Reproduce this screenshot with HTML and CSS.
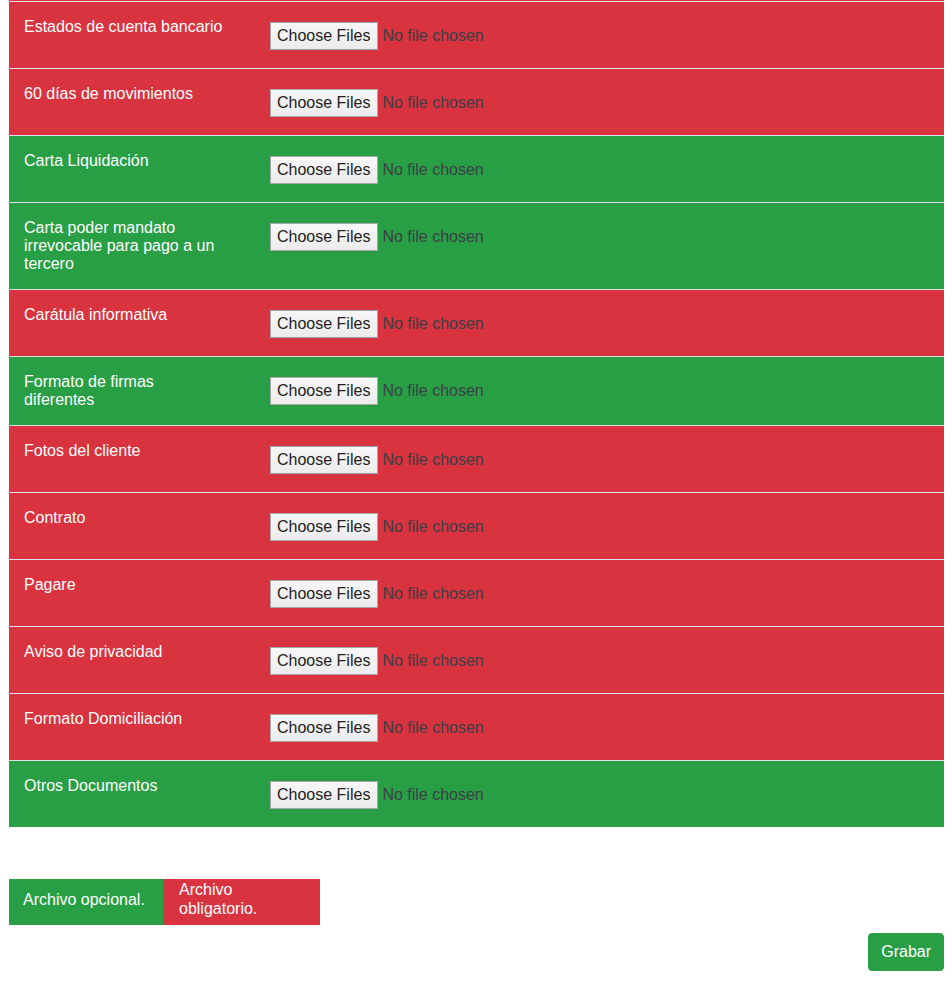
FILE: index.html
```html
<!DOCTYPE html>
<html lang="es">
<head>
<meta charset="utf-8">
<title>Documentos</title>
<link rel="stylesheet" href="styles.css">
</head>
<body>
<div class="page">
  <div class="prev-row"></div>
  <div class="docs">
    <div class="doc req"><div class="doc-label">Estados de cuenta bancario</div><div class="doc-input"><input type="file" multiple></div></div>
    <div class="doc req"><div class="doc-label">60 días de movimientos</div><div class="doc-input"><input type="file" multiple></div></div>
    <div class="doc opt"><div class="doc-label">Carta Liquidación</div><div class="doc-input"><input type="file" multiple></div></div>
    <div class="doc opt"><div class="doc-label">Carta poder mandato irrevocable para pago a un tercero</div><div class="doc-input"><input type="file" multiple></div></div>
    <div class="doc req"><div class="doc-label">Carátula informativa</div><div class="doc-input"><input type="file" multiple></div></div>
    <div class="doc opt"><div class="doc-label">Formato de firmas diferentes</div><div class="doc-input"><input type="file" multiple></div></div>
    <div class="doc req"><div class="doc-label">Fotos del cliente</div><div class="doc-input"><input type="file" multiple></div></div>
    <div class="doc req"><div class="doc-label">Contrato</div><div class="doc-input"><input type="file" multiple></div></div>
    <div class="doc req"><div class="doc-label">Pagare</div><div class="doc-input"><input type="file" multiple></div></div>
    <div class="doc req"><div class="doc-label">Aviso de privacidad</div><div class="doc-input"><input type="file" multiple></div></div>
    <div class="doc req"><div class="doc-label">Formato Domiciliación</div><div class="doc-input"><input type="file" multiple></div></div>
    <div class="doc opt"><div class="doc-label">Otros Documentos</div><div class="doc-input"><input type="file" multiple></div></div>
  </div>

  <div class="legend">
    <div class="legend-item legend-opt">Archivo opcional.</div>
    <div class="legend-item legend-req">Archivo obligatorio.</div>
  </div>

  <div class="actions">
    <button type="button" class="btn-save">Grabar</button>
  </div>
</div>
</body>
</html>
```

FILE: styles.css
```css
html, body {
  margin: 0;
  padding: 0;
  background: #ffffff;
}

body {
  font-family: "Liberation Sans", Arial, Helvetica, sans-serif;
  font-size: 16px;
  color: #212529;
}

.page {
  padding: 0 8px 0 9px;
}

.prev-row {
  height: 1px;
  background: #d8333f;
}

.doc {
  display: grid;
  grid-template-columns: 234px 1fr;
  border-top: 1px solid #dee2e6;
  color: #ffffff;
}

.doc.req {
  background: #d8333f;
}

.doc.opt {
  background: #289f45;
}

.doc-label {
  padding: 16px 15px;
  line-height: 18px;
}

.doc-input {
  padding: 20px 15px 18px 27px;
}

.doc-input input {
  display: block;
  height: 28px;
  margin: 0;
  padding: 0;
  font-family: "Liberation Sans", Arial, Helvetica, sans-serif;
  font-size: 16px;
  color: #3c3f45;
  background: transparent;
}

.doc-input input::file-selector-button {
  height: 28px;
  margin: 0 4px 0 0;
  padding: 0 7px 0 6px;
  border: 1px solid #a6a6a6;
  border-radius: 0;
  background: linear-gradient(#f7f7f7, #ececec);
  color: #222222;
  font-family: "Liberation Sans", Arial, Helvetica, sans-serif;
  font-size: 16px;
}

.legend {
  display: flex;
  margin-top: 52px;
  color: #ffffff;
  line-height: 19px;
}

.legend-item {
  height: 46px;
  display: flex;
  align-items: center;
  box-sizing: border-box;
  padding-bottom: 6px;
}

.legend-opt {
  width: 154px;
  padding-left: 14px;
  padding-right: 14px;
  background: #289f45;
}

.legend-req {
  width: 157px;
  padding-left: 16px;
  padding-right: 16px;
  background: #d8333f;
}

.actions {
  display: flex;
  justify-content: flex-end;
  margin-top: 8px;
}

.btn-save {
  font-family: "Liberation Sans", Arial, Helvetica, sans-serif;
  font-size: 16px;
  line-height: 24px;
  padding: 6px 12px;
  color: #ffffff;
  background: #289f45;
  border: 1px solid #289f45;
  border-radius: 4px;
  cursor: pointer;
}
```
